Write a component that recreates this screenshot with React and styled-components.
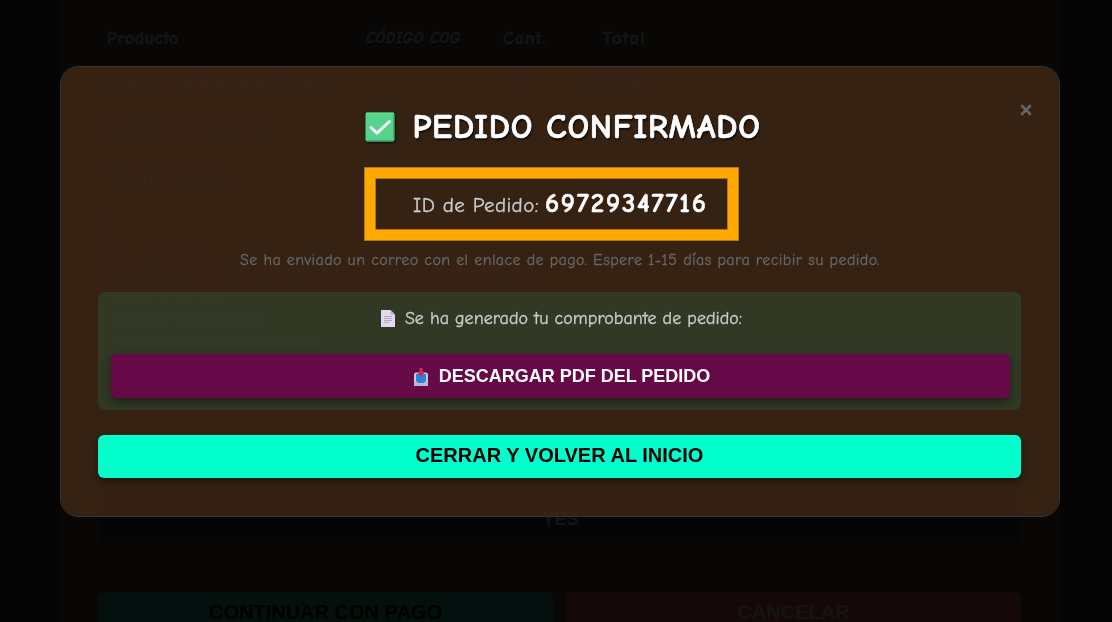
import React from 'react';
import styled, { createGlobalStyle } from 'styled-components';

const lineas = [
  { nombre: 'Cola de Rata Matrix (19cm)', cant: 2, total: '10.56€' },
  { nombre: 'Cola Rata Rosa/Cian', cant: 2, total: '13.12€' },
];

const CheckIcon = () => (
  <TitleIcon width="30" height="30" viewBox="0 0 30 30">
    <rect x="0.5" y="0.5" width="29" height="29" rx="2" fill="#55d48a" />
    <path d="M1 1.2h28" stroke="#6be79d" />
    <path d="M28.8 2v26M2 28.9h26" stroke="#3f9d6b" strokeWidth="1.1" />
    <path d="M6 15.5l6 5.6L24.5 9.5" fill="none" stroke="#f7f1fb" strokeWidth="3" strokeLinecap="round" strokeLinejoin="round" />
  </TitleIcon>
);

const PageIcon = () => (
  <svg width="14" height="17" viewBox="0 0 14 17">
    <path d="M0 0h9.5L14 4.5V17H0z" fill="#e4daef" />
    <path d="M9.5 0v4.5H14z" fill="#bfb2cd" />
    <path d="M3 6.5h8M3 8.5h8M3 10.5h8M3 12.5h5" stroke="#b5a9c0" />
  </svg>
);

const InboxIcon = () => (
  <svg width="14" height="18" viewBox="0 0 14 18">
    <path d="M1.5 4.5h11L14 6v12H0V6z" fill="#cdc3df" />
    <path d="M2 6h10v7l-2 2H4l-2-2z" fill="#2586d8" />
    <path d="M0 14h3l1.5 1.5h5L11 14h3v4H0z" fill="#c3b2d8" />
    <path d="M5.5 0h3v5h2L7 9 3.5 5h2z" fill="#dc2650" />
  </svg>
);

const App = () => {
  return (
    <>
      <GlobalStyle />
      <Page>
        <Panel>
          <Row $header>
            <Cell $ls="0.45px">Producto</Cell>
            <CodeCell>CÓDIGO COG</CodeCell>
            <Cell $ls="0.9px">Cant.</Cell>
            <Cell $right $ls="1.5px">Total</Cell>
          </Row>
          {lineas.map((linea) => (
            <Row key={linea.nombre}>
              <Cell $ls="0.15px">{linea.nombre}</Cell>
              <span />
              <Cell $center>{linea.cant}</Cell>
              <Cell $right $ls="1.2px">{linea.total}</Cell>
            </Row>
          ))}
          <TotalRow>
            <span>Total Pedido</span>
            <span>23.68€</span>
          </TotalRow>
          <ShippingBox>
            <p>📍 Envío a:</p>
            <p>Nombre apellido1 apellido2 | 📞 +34 ### #### 376</p>
            <p>calle A 94 5/F</p>
            <p>Ciudad (22222222)</p>
            <p>✉ Persona@Example.com</p>
          </ShippingBox>
          <ConfirmField>YES</ConfirmField>
          <PanelActions>
            <DimButton $bg="#30a287" $color="#000">CONTINUAR CON PAGO</DimButton>
            <DimButton $bg="#c85550" $color="#c8c8c8">CANCELAR</DimButton>
          </PanelActions>
        </Panel>
      </Page>

      <Overlay>
        <Modal>
          <CloseButton aria-label="Cerrar">
            <svg width="12" height="12" viewBox="0 0 12 12">
              <path d="M2 2l8 8M10 2l-8 8" stroke="#686665" strokeWidth="2.6" strokeLinecap="round" />
            </svg>
          </CloseButton>
          <Title>
            <CheckIcon />
            <TitleText>PEDIDO CONFIRMADO</TitleText>
          </Title>
          <OrderId>
            <span>ID de Pedido:</span>
            <strong>69729347716</strong>
            <Highlight />
          </OrderId>
          <Notice>Se ha enviado un correo con el enlace de pago. Espere 1-15 días para recibir su pedido.</Notice>
          <Receipt>
            <ReceiptText>
              <PageIcon />
              <span>Se ha generado tu comprobante de pedido:</span>
            </ReceiptText>
            <DownloadButton>
              <InboxIcon />
              <span>DESCARGAR PDF DEL PEDIDO</span>
            </DownloadButton>
          </Receipt>
          <HomeButton>CERRAR Y VOLVER AL INICIO</HomeButton>
        </Modal>
      </Overlay>
    </>
  );
};

export default App;

const GlobalStyle = createGlobalStyle`
  * {
    box-sizing: border-box;
  }

  body {
    margin: 0;
    height: 622px;
    overflow: hidden;
    background: #323232;
    font-family: 'Comic Sans MS', 'Comic Neue', Lato, sans-serif;
  }

  p {
    margin: 0;
  }

  button {
    border: 0;
    padding: 0;
    font-family: 'Liberation Sans', Arial, sans-serif;
    font-weight: bold;
  }
`;

const Page = styled.div`
  height: 622px;
  padding: 0 52px 0 60px;
  overflow: hidden;
`;

const Panel = styled.div`
  height: 700px;
  padding: 15px 39px 0 38px;
  background: #504632;
  color: #c8c8c8;
`;

const Row = styled.div`
  display: grid;
  grid-template-columns: 259px 137px 45px 98px;
  align-items: center;
  height: ${({ $header }) => ($header ? '46px' : '45px')};
  padding-left: 9px;
  font-size: 18px;
  font-weight: bold;
  -webkit-text-stroke: 0.6px;
`;

const Cell = styled.span`
  letter-spacing: ${({ $ls }) => $ls || '0'};
  text-align: ${({ $right, $center }) => ($right ? 'right' : $center ? 'center' : 'left')};
`;

const CodeCell = styled.span`
  font-size: 15px;
  font-style: italic;
  letter-spacing: 0.7px;
`;

const TotalRow = styled.div`
  display: flex;
  justify-content: space-between;
  align-items: center;
  width: 547px;
  height: 55px;
  padding-left: 13px;
  font-size: 23px;
  font-weight: bold;
  letter-spacing: 0.8px;
`;

const ShippingBox = styled.div`
  height: 144px;
  margin-top: 14px;
  padding: 16px 17px;
  border-left: 2px solid #666;
  border-radius: 8px;
  font-size: 17px;
  font-weight: bold;
  line-height: 24px;
  letter-spacing: 0.6px;
  white-space: nowrap;
`;

const ConfirmField = styled.div`
  display: flex;
  align-items: flex-end;
  justify-content: center;
  height: 51px;
  margin: 128px 0 0 2px;
  padding-bottom: 14px;
  border-radius: 6px;
  background: #323232;
  font: bold 18px/20px 'Liberation Sans', Arial, sans-serif;
`;

const PanelActions = styled.div`
  display: grid;
  grid-template-columns: 455px 455px;
  gap: 13px;
  margin-top: 49px;
`;

const DimButton = styled.button`
  height: 42px;
  padding-bottom: 1px;
  border-radius: 6px;
  background: ${({ $bg }) => $bg};
  color: ${({ $color }) => $color};
  font-size: 20px;
`;

const Overlay = styled.div`
  position: fixed;
  inset: 0;
  padding: 66px 52px 0 60px;
  background: rgba(0, 0, 0, 0.9);
`;

const Modal = styled.div`
  position: relative;
  display: flex;
  flex-direction: column;
  align-items: center;
  height: 451px;
  padding: 40px 38px 0 37px;
  border: 1px solid #333;
  border-radius: 18px;
  background: rgba(60, 39, 22, 0.86);
  background-clip: padding-box;
`;

const CloseButton = styled.button`
  position: absolute;
  top: 37px;
  right: 27px;
  display: flex;
  background: none;
`;

const Title = styled.h2`
  display: flex;
  align-items: center;
  gap: 18px;
  height: 40px;
  margin: 0 0 0 5px;
  color: #fff;
  font-size: 34px;
  line-height: 40px;
`;

const TitleIcon = styled.svg`
  filter: drop-shadow(1px 1px 1px rgba(0, 0, 0, 0.7));
`;

const TitleText = styled.span`
  width: 347px;
  white-space: nowrap;
  letter-spacing: 0.8px;
  -webkit-text-stroke: 0.7px #fff;
  text-shadow: 1px 2px 2px rgba(0, 0, 0, 0.8);
`;

const OrderId = styled.div`
  position: relative;
  display: flex;
  align-items: baseline;
  gap: 6px;
  height: 74px;
  width: 375px;
  margin: 20px 0 0 -16px;
  padding: 21px 0 0 49px;
  color: #ccc;
  font-size: 21px;
  line-height: 32px;
  letter-spacing: 0.42px;
  white-space: nowrap;
  -webkit-text-stroke: 0.35px;

  strong {
    color: #fff;
    font-size: 27px;
    letter-spacing: 1.8px;
    -webkit-text-stroke: 0.6px;
  }
`;

const Highlight = styled.div`
  position: absolute;
  inset: 0;
  border: 11px solid #ffa800;
  outline: 1px solid #b17810;
  outline-offset: -1px;
  box-shadow: inset 0 0 0 1px #b17810;
`;

const Notice = styled.p`
  margin: 7px 0 0 1px;
  color: #666;
  font-size: 16px;
  line-height: 24px;
  letter-spacing: 0.39px;
  white-space: nowrap;
  -webkit-text-stroke: 0.3px;
`;

const Receipt = styled.div`
  width: 923px;
  height: 118px;
  margin-top: 20px;
  padding: 13px 11px 0 13px;
  border-radius: 7px;
  background: rgba(25, 181, 133, 0.15);
`;

const ReceiptText = styled.div`
  display: flex;
  align-items: center;
  justify-content: center;
  gap: 10px;
  height: 26px;
  padding-left: 2px;
  color: #ccc;
  font-size: 18px;
  letter-spacing: 0.04px;
  white-space: nowrap;
  -webkit-text-stroke: 0.35px;
`;

const DownloadButton = styled.button`
  display: flex;
  align-items: center;
  justify-content: center;
  gap: 11px;
  width: 899px;
  height: 44px;
  margin-top: 23px;
  padding: 1px 0 0 3px;
  border-radius: 5px;
  background: #650947;
  box-shadow: 0 4px 8px rgba(0, 0, 0, 0.4);
  color: #fff;
  font-size: 18px;
`;

const HomeButton = styled.button`
  width: 923px;
  height: 43px;
  margin-top: 25px;
  padding-bottom: 2px;
  border-radius: 6px;
  background: #00ffcc;
  box-shadow: 0 4px 8px rgba(0, 0, 0, 0.4);
  color: #000;
  font-size: 20px;
`;
